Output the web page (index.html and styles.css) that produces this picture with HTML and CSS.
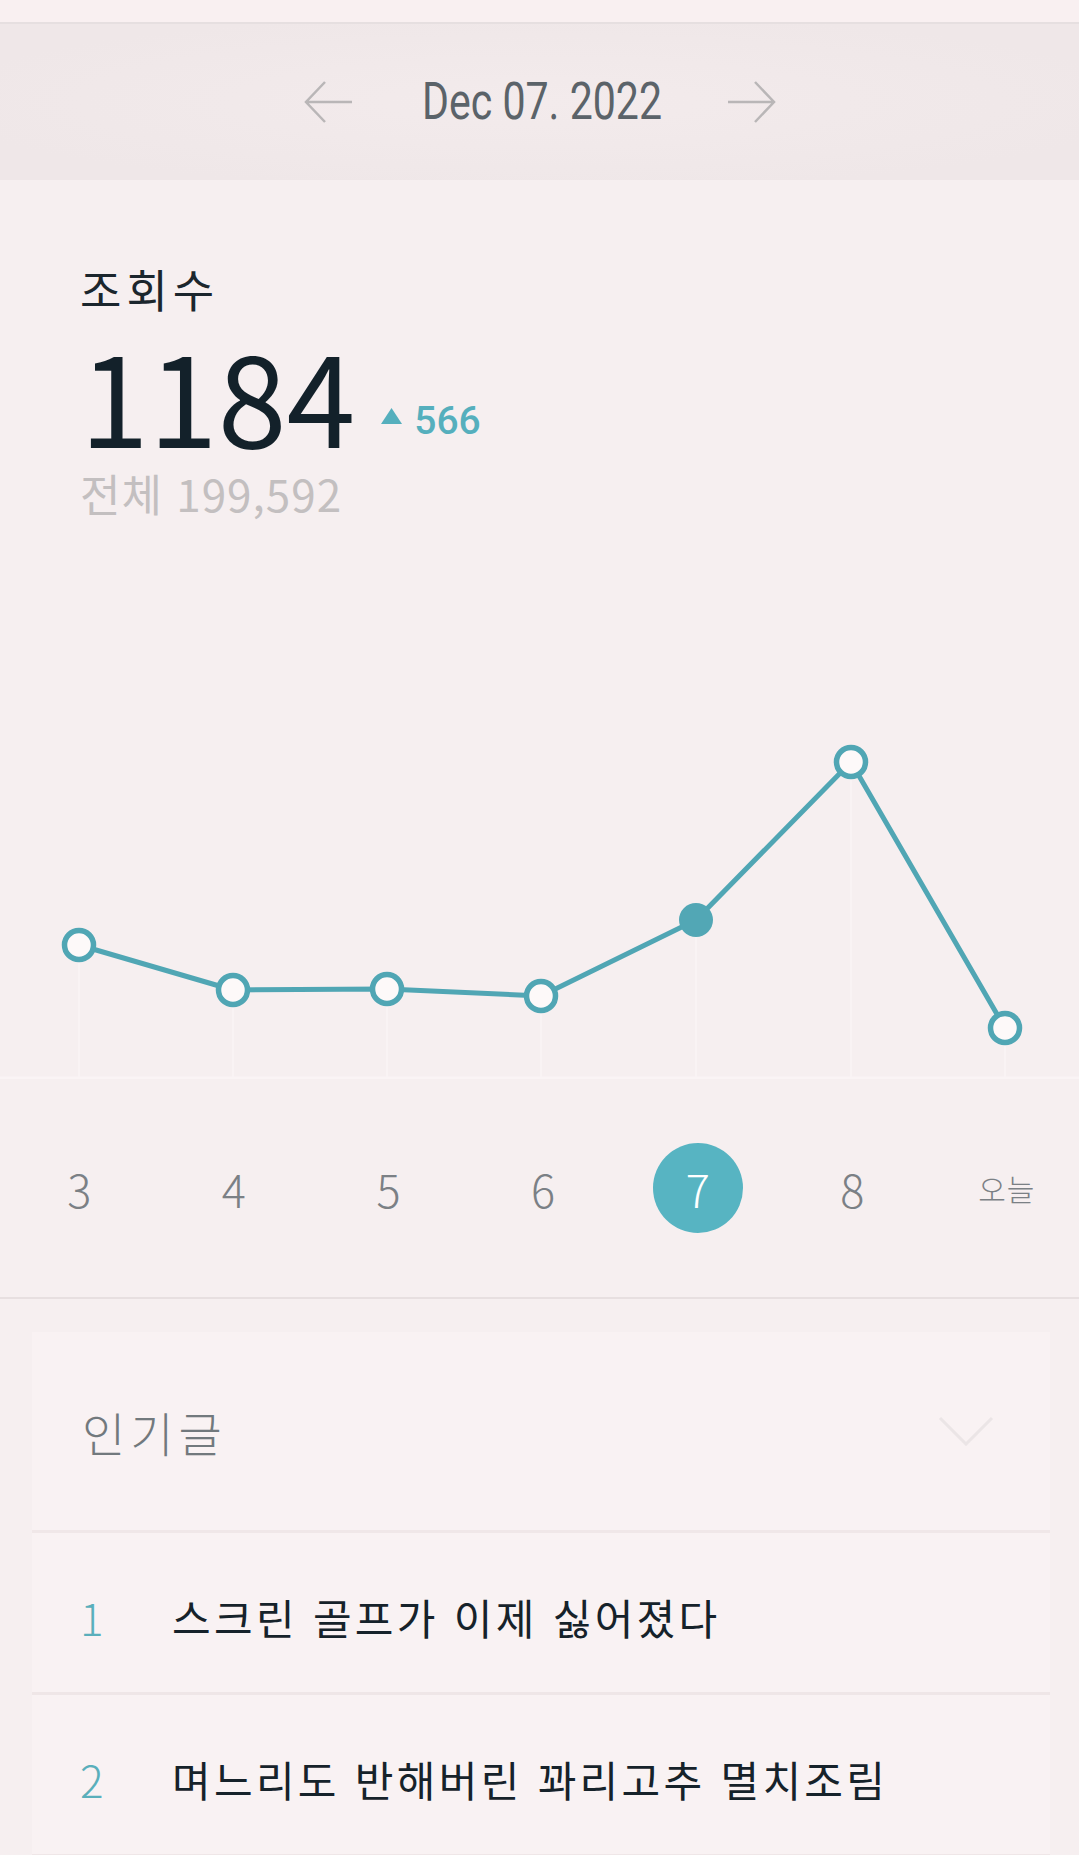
FILE: index.html
```html
<!DOCTYPE html>
<html lang="ko">
<head>
<meta charset="utf-8">
<title>통계</title>
<link rel="stylesheet" href="styles.css">
</head>
<body>
<div class="topbar"></div>
<header class="date-nav">
  <svg class="arrow" width="50" height="42" viewBox="0 0 50 42"><path d="M49 21H3M22 1L3 21l19 20"/></svg>
  <div class="date"><span>Dec 07. 2022</span></div>
  <svg class="arrow" width="50" height="42" viewBox="0 0 50 42"><path d="M1 21h46M28 1l19 20-19 20"/></svg>
</header>
<section class="stats">
  <div class="label">조회수</div>
  <div class="count"><span class="num">1184</span><span class="delta"><svg class="tri" width="21" height="16" viewBox="0 0 21 16"><path d="M10.5 0L21 16H0z"/></svg>566</span></div>
  <div class="total">전체 199,592</div>
</section>
<svg class="chart" width="1079" height="539" viewBox="0 0 1079 539">
  <g class="grid">
    <line x1="79" y1="405" x2="79" y2="537"/>
    <line x1="233" y1="450" x2="233" y2="537"/>
    <line x1="387" y1="449" x2="387" y2="537"/>
    <line x1="541" y1="456" x2="541" y2="537"/>
    <line x1="696" y1="380" x2="696" y2="537"/>
    <line x1="851" y1="222" x2="851" y2="537"/>
    <line x1="1005" y1="488" x2="1005" y2="537"/>
  </g>
  <line class="base" x1="0" y1="538" x2="1079" y2="538"/>
  <polyline class="line" points="79,405 233,450 387,449 541,456 696,380 851,222 1005,488"/>
  <g class="dots">
    <circle cx="79" cy="405" r="14.5"/>
    <circle cx="233" cy="450" r="14.5"/>
    <circle cx="387" cy="449" r="14.5"/>
    <circle cx="541" cy="456" r="14.5"/>
    <circle cx="851" cy="222" r="14.5"/>
    <circle cx="1005" cy="488" r="14.5"/>
  </g>
  <circle class="dot-active" cx="696" cy="380" r="17"/>
</svg>
<div class="axis">
  <div class="tick">3</div>
  <div class="tick">4</div>
  <div class="tick">5</div>
  <div class="tick">6</div>
  <div class="tick"><span class="active">7</span></div>
  <div class="tick">8</div>
  <div class="tick today">오늘</div>
</div>
<div class="divider"></div>
<section class="card">
  <div class="card-head">
    <span class="card-title">인기글</span>
    <svg class="chevron" width="56" height="30" viewBox="0 0 56 30"><path d="M2 2l26 26L54 2"/></svg>
  </div>
  <div class="row"><span class="rank">1</span><span class="post">스크린 골프가 이제 싫어졌다</span></div>
  <div class="row"><span class="rank">2</span><span class="post">며느리도 반해버린 꽈리고추 멸치조림</span></div>
</section>
</body>
</html>
```
FILE: styles.css
```css
html, body {
  margin: 0;
  padding: 0;
}
body {
  width: 1079px;
  height: 1855px;
  overflow: hidden;
  background: #f6eff0;
  font-family: "Noto Sans CJK KR", "Noto Sans", sans-serif;
  color: #17232a;
}
.topbar {
  height: 22px;
  background: #f9f0f1;
  border-bottom: 2px solid #e6dfe0;
}
.date-nav {
  height: 156px;
  background: radial-gradient(ellipse at center, #f3ebec 0%, #efe7e8 80%);
  display: flex;
  align-items: center;
  justify-content: center;
}
.arrow path {
  fill: none;
  stroke: #b9b6b7;
  stroke-width: 2.5;
}
.date {
  width: 243px;
  margin: 0 62px 0 69px;
  height: 60px;
  display: flex;
  align-items: center;
}
.date span {
  display: inline-block;
  white-space: nowrap;
  font-family: Roboto, "Liberation Sans", sans-serif;
  font-size: 52px;
  color: #5b6369;
  transform: scaleX(0.79);
  transform-origin: left center;
  line-height: 1;
}
.stats {
  height: 360px;
  box-sizing: border-box;
  padding: 86px 0 0 80px;
}
.label {
  font-size: 45px;
  letter-spacing: 5px;
  line-height: 1;
  height: 44px;
  color: #1b262d;
}
.count {
  margin-top: 22px;
  font-size: 124px;
  line-height: 1;
  height: 124px;
  color: #13212a;
  white-space: nowrap;
}
.delta {
  font-family: Roboto, "Liberation Sans", sans-serif;
  font-weight: 500;
  font-size: 39px;
  line-height: 1;
  color: #55afbd;
  vertical-align: 14px;
  margin-left: 26px;
}
.tri {
  fill: #55afbd;
  vertical-align: 10px;
  margin-right: 12px;
}
.total {
  margin-top: 15px;
  font-size: 44px;
  letter-spacing: 1px;
  line-height: 1;
  height: 44px;
  color: #c3bfc0;
}
.chart {
  display: block;
}
.grid line {
  stroke: #f9f3f4;
  stroke-width: 2;
}
.base {
  stroke: #faf4f5;
  stroke-width: 3;
}
.line {
  fill: none;
  stroke: #50a6b4;
  stroke-width: 5;
  stroke-linejoin: round;
}
.dots circle {
  fill: #fdf9f9;
  stroke: #50a6b4;
  stroke-width: 5.5;
}
.dot-active {
  fill: #52a7b5;
}
.axis {
  height: 218px;
  padding-left: 2px;
  display: grid;
  grid-template-columns: repeat(7, 154.6px);
  align-items: center;
}
.tick {
  display: flex;
  justify-content: center;
  align-items: center;
  font-size: 45px;
  font-weight: 300;
  line-height: 1;
  color: #7b8085;
}
.tick.today {
  font-size: 30px;
  letter-spacing: 1px;
}
.active {
  width: 90px;
  height: 90px;
  border-radius: 50%;
  background: #57b4c2;
  color: #ffffff;
  display: flex;
  justify-content: center;
  align-items: center;
}
.divider {
  height: 2px;
  background: #e7dfe0;
}
.card {
  margin: 33px 29px 0 32px;
  background: #f9f2f3;
}
.card-head {
  height: 201px;
  box-sizing: border-box;
  border-bottom: 3px solid #f0e7e8;
  display: flex;
  align-items: center;
  justify-content: space-between;
  padding: 0 56px 0 50px;
}
.card-title {
  font-size: 47px;
  letter-spacing: 5px;
  font-weight: 300;
  line-height: 1;
  color: #72797d;
}
.chevron path {
  fill: none;
  stroke: #ebe5e6;
  stroke-width: 3;
}
.row {
  height: 162px;
  box-sizing: border-box;
  padding: 8px 0 0 48px;
  border-bottom: 3px solid #efe6e7;
  display: flex;
  align-items: center;
}
.rank {
  width: 92px;
  flex: none;
  font-size: 44px;
  font-weight: 300;
  line-height: 1;
  color: #5aafbb;
}
.post {
  font-size: 42px;
  letter-spacing: 3.3px;
  line-height: 1;
  color: #16222a;
  white-space: nowrap;
}
```
